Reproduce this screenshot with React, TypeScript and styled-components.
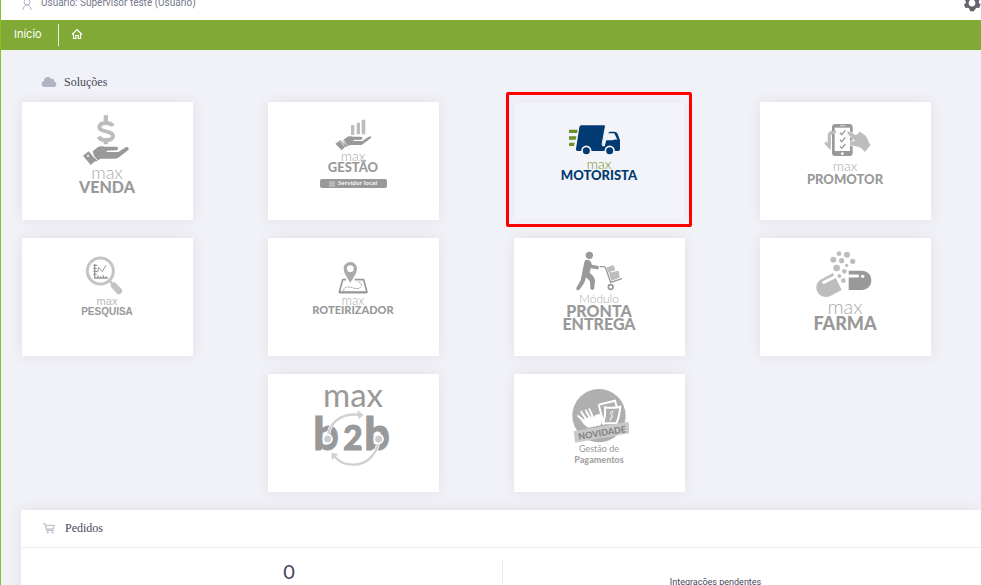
import React from "react";
import styled, { createGlobalStyle, css } from "styled-components";

const GlobalStyle = createGlobalStyle`
  * { box-sizing: border-box; }
  html, body, #root { height: 100%; }
  body {
    margin: 0;
    overflow: hidden;
    background: #f1f2f7;
    font-family: Roboto, "Open Sans", sans-serif;
  }
`;

const Page = styled.div`
  min-height: 100%;
  border-left: 1px solid #84c225;
`;

const TopBar = styled.header`
  display: flex;
  justify-content: space-between;
  align-items: flex-start;
  height: 20px;
  padding: 0 0 0 20px;
  overflow: hidden;
  background: #fff;
`;

const User = styled.div`
  display: flex;
  align-items: flex-end;
  gap: 8px;
  height: 10px;
  font-size: 10px;
  line-height: 14px;
  color: #74788d;
  white-space: nowrap;
`;

const IconButton = styled.button`
  display: flex;
  align-items: flex-end;
  height: 12px;
  padding: 0;
  border: 0;
  background: none;
  color: #646470;
`;

const Nav = styled.nav`
  display: flex;
  align-items: center;
  height: 30px;
  background: #80a935;
`;

const NavLink = styled.a`
  display: flex;
  align-items: center;
  height: 22px;
  padding: 0 16px 2px 13px;
  font-family: Inter, sans-serif;
  font-size: 11px;
  line-height: 16px;
  color: #fff;
  text-decoration: none;

  & + & {
    padding-left: 12px;
    border-left: 1px solid #e6eed8;
  }
`;

const SectionTitle = styled.h2`
  display: flex;
  align-items: center;
  gap: 7px;
  margin: 0;
  font-family: "Liberation Serif", serif;
  font-size: 12px;
  font-weight: 400;
  line-height: 16px;
  color: #48465b;
`;

const Solutions = styled.section`
  padding: 24px 50px 18px 21px;

  ${SectionTitle} {
    padding: 0 0 12px 19px;
  }
`;

const CardGrid = styled.div`
  display: grid;
  grid-template-columns: repeat(4, 1fr);
  gap: 18px 75px;
`;

const Card = styled.button<{ $top: number; $active?: boolean; $column?: number }>`
  position: relative;
  display: flex;
  flex-direction: column;
  align-items: center;
  justify-content: flex-start;
  height: 118px;
  padding: ${(p) => p.$top}px 1px 0 0;
  border: 0;
  border-radius: 1px;
  background: #fff;
  box-shadow: 0 0 13px rgba(82, 63, 105, 0.1);
  ${(p) => p.$column && css`grid-column-start: ${p.$column};`}
  ${(p) =>
    p.$active &&
    css`
      background: #f3f4f9;
      box-shadow: inset 0 0 0 1px #eff0f3, 0 0 10px rgba(82, 63, 105, 0.05);

      &::after {
        content: "";
        position: absolute;
        inset: -10px -7px -7px -8px;
        border: 3px solid #f00;
        border-radius: 2px;
      }
    `}
`;

const Word = styled.span<{ $size: number; $line: number; $face?: string; $weight?: number; $color?: string }>`
  font-family: ${(p) => (p.$face ? `"${p.$face}", ` : "")}Lato, sans-serif;
  font-size: ${(p) => p.$size}px;
  font-weight: ${(p) => p.$weight ?? 300};
  line-height: ${(p) => p.$line}px;
  color: ${(p) => p.$color ?? "#aaa"};
  white-space: nowrap;
`;

const ServerTag = styled.span`
  display: flex;
  align-items: center;
  justify-content: center;
  gap: 3px;
  width: 67px;
  height: 9px;
  margin-top: 6px;
  border-radius: 2px;
  background: #999;
  color: #fff;
  font-family: "Open Sans", sans-serif;
  font-size: 6px;
  font-weight: 600;
  line-height: 9px;
`;

const Art = styled.svg`
  display: block;
  flex: none;
`;

const Orders = styled.section`
  margin-left: 20px;
  background: #fff;
  box-shadow: 0 0 13px rgba(82, 63, 105, 0.1);

  ${SectionTitle} {
    height: 38px;
    padding: 0 22px 2px;
    gap: 10px;
    border-bottom: 1px solid #ebedf2;
  }
`;

const Stats = styled.div`
  display: grid;
  grid-template-columns: 1fr 1fr;
  padding: 12px 53px 0 55px;
`;

const Stat = styled.div`
  height: 80px;
  text-align: center;
  color: #48465b;

  & + & {
    padding-top: 16px;
    border-left: 1px solid #ebedf2;
  }
`;

const StatValue = styled.div`
  font-family: Lato, sans-serif;
  font-size: 20px;
  line-height: 22px;
`;

const StatLabel = styled.div`
  font-size: 9px;
  line-height: 12px;
`;

const DARK = "#999";
const LIGHT = "#bdbdbd";

const UserIcon = () => (
  <Art width="12" height="12" viewBox="0 0 12 12" fill="none" stroke="#b3b1c9" strokeWidth="1">
    <circle cx="6" cy="4" r="3" />
    <path d="M2 12c0-3 2-5 4-5s4 2 4 5" />
  </Art>
);

const GearIcon = () => (
  <Art width="18" height="18" viewBox="0 0 24 24">
    <path
      fill="currentColor"
      fillRule="evenodd"
      d="M9.5 1h5l.7 3 2 .9L20 3.400l3 4-2 2.300.3 2.300 2.200 2-2 4.500-3.200-.2-1.700 1.300L14.500 23h-5l-1-3.400-1.800-1.200-3.200.1-2.200-4.300 2.400-2.200.2-2.300-2.200-2.300 3-4 3 1.500 1.600-.9zM12 7.500a4.500 4.500 0 1 0 0 9 4.500 4.500 0 0 0 0-9z"
    />
  </Art>
);

const HomeIcon = () => (
  <Art width="12" height="12" viewBox="0 0 12 12" fill="none" stroke="#fff" strokeWidth="1.2">
    <path d="M1 6.500 6 1.500l5 5M2.500 5.500V10.500h2.300V7.500h2.400v3h2.300v-5" />
  </Art>
);

const CloudIcon = () => (
  <Art width="16" height="12" viewBox="0 0 48 36">
    <path fill="#b3b1c6" d="M11 33C5 33 2 29 2 24c0-5 3-8 7-9C9 7 14 3 20 3c5 0 8 2 10 6 6-2 11 2 10 8 4 1 6 4 6 8 0 5-3 8-8 8z" />
  </Art>
);

const CartIcon = () => (
  <Art width="12" height="12" viewBox="0 0 36 36" fill="none" stroke="#b3b1c6" strokeWidth="3">
    <path d="M0 5h6l5 20h21M8 10h26l-3 11H10" />
    <circle cx="14" cy="31" r="2" />
    <circle cx="28" cy="31" r="2" />
  </Art>
);

const VendaArt = () => (
  <Art width="60" height="50" viewBox="172 44 180 150">
    <path d="M279 77C273 64 240 65 239 80c-1 16 41 10 41 27 0 16-36 17-43 2" fill="none" stroke={LIGHT} strokeWidth="12" />
    <path d="M252 45h13v17h-13zM252 114h13v18h-13z" fill={LIGHT} />
    <path
      fill={DARK}
      d="m219 153 16-13c7-3 12-2 20-1h35c7 1 7 10 0 11l-29 1v4h35l22-14c6-3 12 2 8 8l-28 22c-4 3-8 4-13 4h-42l-15 9z"
    />
    <path fill={DARK} fillRule="evenodd" d="m190 166 17-13 23 27-17 14zM205 163a3 3 0 1 0 .1 0z" />
    <path d="m211 153 22 27" stroke="#fff" strokeWidth="3" />
  </Art>
);

const GestaoArt = () => (
  <Art width="60" height="32" viewBox="175 57 180 96">
    <path fill={LIGHT} d="M259 77q0-2 2-2h8v30h-10zM276 70q0-2 2-2h8v35h-10zM291 61q0-2 2-2h9v44h-11z" />
    <path
      fill={DARK}
      d="m235 121 13-10c5-3 10-2 16-1h25c6 1 6 8 0 9l-23 1v3h27l18-12c6-3 11 0 8 3l-24 18c-4 3-7 3-11 3h-28l-12 6zM212 131l16-11 16 18-13 13z"
    />
    <path d="m226 122 13 17M236 119l12 18" stroke="#fff" strokeWidth="2" />
  </Art>
);

const TruckArt = () => (
  <Art width="60" height="32" viewBox="209 112 180 96">
    <g fill="#003a70">
      <path d="M246 113h68q5 0 4 5l-10 58h8l10-38q2-6 7-6h12q6 0 9 5l8 20v27q0 6-5 6H235q-6 0-5-6l10-65q1-6 6-6z" />
    </g>
    <path fill="#f3f4f9" d="M324 137h18q4 0 5 4l7 15q-10-1-14 2h-21z" />
    <path d="M319 112 308 171" stroke="#f3f4f9" strokeWidth="3" />
    <g fill="#003a70" stroke="#f3f4f9" strokeWidth="5">
      <circle cx="261" cy="189" r="13" />
      <circle cx="331" cy="189" r="13" />
    </g>
    <path fill="#6c9023" d="M206 126h29l-2 10h-29zM209 146h22l-2 10h-22zM210 165h16l-2 10h-16z" />
  </Art>
);

const PromotorArt = () => (
  <Art width="60" height="34" viewBox="182 69 180 102">
    <path fill={LIGHT} d="M220 130V104q1-8 9-11l12-4q6 0 4 7l-15 8v34l-2 12-18-19 4-7z" />
    <rect x="233" y="72" width="62" height="96" rx="10" fill={DARK} />
    <path fill="#fff" d="M241 83h46v70h-46z" />
    <path fill={LIGHT} d="M230 96q10-6 15-4 3 7-8 10l-7 3z" />
    <path d="M257 77h16" stroke="#fff" strokeWidth="2" />
    <circle cx="264" cy="161" r="4" fill="#fff" />
    <path d="m257 98 5 6 11-13M257 119l5 6 11-13M257 139l5 6 11-13" fill="none" stroke={DARK} strokeWidth="4" />
    <path fill={LIGHT} stroke="#fff" strokeWidth="2" d="m280 103 21 19-15 1v13l32 7 14 14 17-21-13-28-19-14-12 11-20-11c-7-2-9 4-5 9z" />
  </Art>
);

const PesquisaArt = () => (
  <Art width="60" height="40" viewBox="172 59 180 120">
    <circle cx="242" cy="104" r="39" fill="none" stroke="#c4c4c4" strokeWidth="9" />
    <path d="m270 134 13 13" stroke="#c4c4c4" strokeWidth="8" />
    <path d="m283 148 15 16" stroke="#c4c4c4" strokeWidth="19" strokeLinecap="round" />
    <path d="M225 83v42h40M221 87h12M221 96h10M221 105h12M221 114h10M235 117v9M243 120v6M251 117v9M259 120v6" fill="none" stroke={DARK} strokeWidth="4" />
    <path d="m234 108 3-15 11 13 11-20" fill="none" stroke={DARK} strokeWidth="3" />
  </Art>
);

const RoteirizadorArt = () => (
  <Art width="60" height="32" viewBox="175 77 180 96">
    <path d="M244 130h-10l-10 38h83l-10-38h-27" fill="none" stroke={DARK} strokeWidth="5" strokeLinejoin="round" />
    <path d="M224 168h83" stroke={DARK} strokeWidth="6" />
    <path d="M237 163c0-14 18-12 26-9 11 4 24 5 27-6 2-7-4-11-12-12" fill="none" stroke={DARK} strokeWidth="3" strokeDasharray="6 3" />
    <path fill="#ababab" fillRule="evenodd" d="M257 77c-12 0-20 9-20 20 0 15 13 28 20 43 7-15 20-28 20-43 0-11-8-20-20-20zm0 10a10 10 0 1 1 0 20 10 10 0 0 1 0-20z" />
  </Art>
);

const EntregaArt = () => (
  <Art width="60" height="41" viewBox="178 42 180 123">
    <circle cx="239" cy="55" r="11" fill={DARK} />
    <path fill={DARK} d="M224 75q2-8 10-7 8 0 10 8l3 7 16 3c7 2 6 11-1 11l-19-3-3 13q15 12 16 24l-2 22c-1 8-13 7-12 0l-1-20-12-12-5 16-13 19c-5 7-15 3-10-5l12-21z" />
    <path d="M270 89h13q4 1 6 7l14 40 34-11" fill="none" stroke={DARK} strokeWidth="4" />
    <circle cx="303" cy="150" r="7" fill="none" stroke={DARK} strokeWidth="5" />
    <path fill={LIGHT} d="m290 92 18-7q4-1 5 3l4 12-21 6zM298 109l26-8q3 0 4 3l2 18-25 9z" />
    <path d="M297 107h9" stroke={LIGHT} strokeWidth="3" />
  </Art>
);

const FarmaArt = () => (
  <Art width="60" height="46" viewBox="182 43 180 138">
    <g fill={LIGHT}>
      <circle cx="254" cy="51" r="7" />
      <circle cx="278" cy="54" r="9" />
      <circle cx="237" cy="69" r="9" />
      <circle cx="262" cy="72" r="8" />
      <circle cx="295" cy="74" r="8" />
      <circle cx="277" cy="86" r="5" />
      <circle cx="247" cy="94" r="10" />
      <circle cx="270" cy="104" r="7" />
      <circle cx="255" cy="118" r="6" />
      <circle cx="267" cy="132" r="7" />
      <path d="m237 108 25 52-34 18c-17 7-34 0-40-15-6-16 1-30 16-37z" />
    </g>
    <path d="m208 137 33-16" stroke="#fff" strokeWidth="9" strokeLinecap="round" />
    <path d="m236 107 8 16" stroke="#fff" strokeWidth="3" />
    <path fill={DARK} d="M283 102h39c17 0 29 12 29 29s-12 29-29 29h-39z" />
    <path d="M283 118h27" stroke="#fff" strokeWidth="9" strokeLinecap="round" />
    <circle cx="325" cy="119" r="5" fill="#fff" />
  </Art>
);

const B2bArt = () => (
  <Art width="80" height="64" viewBox="145 102 240 192">
    <g fontFamily="Lato, sans-serif" fontWeight="900" fill={DARK} stroke={DARK} strokeWidth="3">
      <text y="238" fontSize="134">
        <tspan x="146">b</tspan>
        <tspan x="236" fontSize="100">2</tspan>
        <tspan x="299">b</tspan>
      </text>
    </g>
    <g fill="none" stroke="#fff" strokeWidth="11">
      <path d="M190 202c0-47 40-75 91-71M342 204c-2 44-35 77-76 77-25 0-45-10-56-25" />
    </g>
    <g fill="none" stroke="#d0d0d0" strokeWidth="7">
      <path d="M190 202c0-47 40-75 91-71M342 204c-2 44-35 77-76 77-25 0-45-10-56-25" />
    </g>
    <path fill="#d0d0d0" d="m278 118 19 14-16 13zM200 246l21 3-19 19z" />
    <g fill="#ccc" stroke="#fff" strokeWidth="5">
      <circle cx="189" cy="204" r="13" />
      <circle cx="342" cy="204" r="13" />
    </g>
  </Art>
);

const PagamentosArt = () => (
  <Art width="60" height="55" viewBox="178 51 180 165">
    <circle cx="268" cy="134" r="80" fill="#afafaf" />
    <g fill="none" stroke="#fff" strokeWidth="6">
      <path d="m267 101 49-12 5 18M267 101l16 60" />
      <path fill="#afafaf" d="M286 109q24 4 46-2-4 35-12 50h-40q8-22 6-48z" />
    </g>
    <path d="M312 123c-8-5-15 4-7 9 8 6 1 15-6 11M309 119l-7 32" fill="none" stroke="#fff" strokeWidth="2" />
    <path fill="#fff" d="M213 146q14 0 26-8 8-3 14 1 3-10 19-10 10 20 0 34l-36 7q-15-8-23-24z" />
    <path d="m219 147-14-13M230 145l-16-23M241 141l-13-23M251 141l-12-26" stroke="#fff" strokeWidth="6" strokeLinecap="round" />
    <path d="m203 132 3 2M212 121l2 3M226 118l2 3M238 118l2 3" stroke="#afafaf" strokeWidth="3" />
    <path fill="#c9c9c9" d="m192 181 164-29 6 34-166 29z" />
    <text x="277" y="195" transform="rotate(-9 277 184)" textAnchor="middle" fontFamily="Lato, sans-serif" fontWeight="900" fontSize="27" fill="#848484">
      NOVIDADE
    </text>
  </Art>
);

const ServerIcon = () => (
  <Art width="6" height="6" viewBox="0 0 18 18" fill="none" stroke="#c4c4c4" strokeWidth="2">
    <path d="M1 2h16v4H1zM1 8h16v4H1zM1 14h16v3H1zM6 2v15M12 2v15" />
  </Art>
);

export default function App() {
  return (
    <>
      <GlobalStyle />
      <Page>
        <TopBar>
          <User>
            <UserIcon />
            Usuário: Supervisor teste (Usuário)
          </User>
          <IconButton aria-label="Configurações">
            <GearIcon />
          </IconButton>
        </TopBar>
        <Nav>
          <NavLink href="#inicio">Início</NavLink>
          <NavLink href="#home" aria-label="Home">
            <HomeIcon />
          </NavLink>
        </Nav>
        <main>
          <Solutions>
            <SectionTitle>
              <CloudIcon />
              Soluções
            </SectionTitle>
            <CardGrid>
              <Card $top={13}>
                <VendaArt />
                <Word $size={18} $line={14}>max</Word>
                <Word $size={16} $line={16} $weight={900} $color={DARK}>VENDA</Word>
              </Card>
              <Card $top={17}>
                <GestaoArt />
                <Word $size={14} $line={10}>max</Word>
                <Word $size={13} $line={12} $weight={900} $color={DARK}>GESTÃO</Word>
                <ServerTag>
                  <ServerIcon />
                  Servidor local
                </ServerTag>
              </Card>
              <Card $top={23} $active>
                <TruckArt />
                <Word $size={14} $line={13} $color="#6c9023">max</Word>
                <Word $size={13} $line={10} $weight={900} $color="#003a70">MOTORISTA</Word>
              </Card>
              <Card $top={21}>
                <PromotorArt />
                <Word $size={14} $line={18}>max</Word>
                <Word $size={13} $line={8} $weight={900} $color={DARK}>PROMOTOR</Word>
              </Card>

              <Card $top={18}>
                <PesquisaArt />
                <Word $size={11} $line={10} $face="Liberation Sans" $color="#bbb">max</Word>
                <Word $size={10} $line={11} $face="Liberation Sans" $weight={700} $color={DARK}>PESQUISA</Word>
              </Card>
              <Card $top={24}>
                <RoteirizadorArt />
                <Word $size={13} $line={12}>max</Word>
                <Word $size={11} $line={8} $weight={900} $color={DARK}>ROTEIRIZADOR</Word>
              </Card>
              <Card $top={13}>
                <EntregaArt />
                <Word $size={12} $line={14}>Módulo</Word>
                <Word $size={16} $line={10} $weight={900} $color={DARK}>PRONTA</Word>
                <Word $size={16} $line={15} $weight={900} $color={DARK}>ENTREGA</Word>
              </Card>
              <Card $top={13}>
                <FarmaArt />
                <Word $size={20} $line={18}>max</Word>
                <Word $size={18} $line={16} $weight={900} $color={DARK}>FARMA</Word>
              </Card>

              <Card $top={9} $column={2}>
                <Word $size={33} $line={22} $weight={400} $color={DARK}>max</Word>
                <B2bArt />
              </Card>
              <Card $top={14}>
                <PagamentosArt />
                <Word $size={9} $line={12} $weight={400} $color={DARK}>Gestão de</Word>
                <Word $size={9} $line={10} $weight={900} $color="#a5a5a5">Pagamentos</Word>
              </Card>
            </CardGrid>
          </Solutions>
          <Orders>
            <SectionTitle>
              <CartIcon />
              Pedidos
            </SectionTitle>
            <Stats>
              <Stat>
                <StatValue>0</StatValue>
              </Stat>
              <Stat>
                <StatLabel>Integrações pendentes</StatLabel>
              </Stat>
            </Stats>
          </Orders>
        </main>
      </Page>
    </>
  );
}
